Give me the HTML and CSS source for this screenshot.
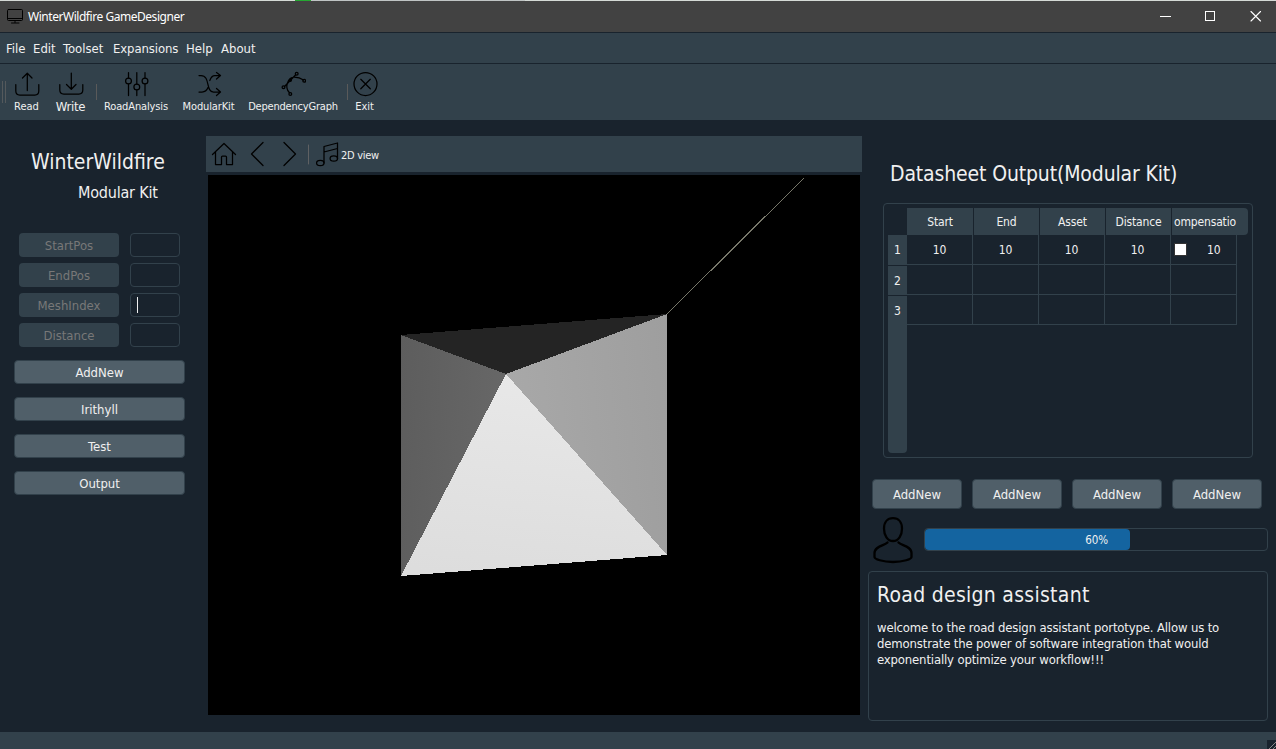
FILE: index.html
```
<!DOCTYPE html>
<html lang="en">
<head>
<meta charset="utf-8">
<title>WinterWildfire GameDesigner</title>
<link rel="stylesheet" href="styles.css">
</head>
<body>
<div class="window">
  <div class="backdrop"></div>
  <header class="titlebar">
    <svg class="app-icon" width="18" height="16" viewBox="0 0 18 16"><path d="M1.500.5h13q1 0 1 1v9q0 1-1 1h-13q-1 0-1-1v-9q0-1 1-1zM.5 9.500h15M8 11.500v2M4.500 14h7.500"/></svg>
    <span class="app-title">WinterWildfire GameDesigner</span>
    <svg class="win-controls" width="104" height="12" viewBox="0 0 104 12"><path shape-rendering="crispEdges" d="M0 5.500h10M45.500.5h9v9h-9z"/><path d="M91 .5l9.500 9.500M100.500 .5l-9.500 9.500"/></svg>
  </header>
  <nav class="menubar"><span class="m-file">File</span><span class="m-edit">Edit</span><span class="m-tools">Toolset</span><span class="m-exp">Expansions</span><span class="m-help">Help</span><span>About</span></nav>
  <div class="toolbar">
    <i class="grip"></i>
    <div class="tool"><svg width="26" height="26" viewBox="0 0 26 26"><path d="M1.800 13.500V20q0 4 4 4h15q4 0 4-4v-6.500M13.300 19.500V2.500M8.500 7l4.800-4.800L18 7"/></svg><span>Read</span></div>
    <div class="tool tool-large"><svg width="26" height="26" viewBox="0 0 26 26"><path d="M1.800 13.500V19q0 4 4 4h15q4 0 4-4v-5.500M13.300 2v16M8.500 13.500l4.800 4.800 4.700-4.800"/></svg><span>Write</span></div>
    <i class="sep"></i>
    <div class="tool tool-road"><svg width="26" height="26" viewBox="0 0 26 26"><path d="M5.500 1.500V7M5.500 13v11.500M13.800 1.500V13M13.800 19v5.500M22 1.500V7M22 13v11.500"/><circle cx="5.500" cy="10" r="2.900"/><circle cx="13.800" cy="16" r="2.900"/><circle cx="22" cy="10" r="2.900"/></svg><span>RoadAnalysis</span></div>
    <div class="tool tool-kit"><svg width="26" height="26" viewBox="0 0 26 26"><path d="M3 4.500h2c9.500 0 4.500 16.500 12.500 16.500h6.500M3 21h3c3.500 0 5-2 6-4.500M13.800 9.500c1-3 2.500-5 5-5H24M20.500 1.500l4 3-4 3.500M20.500 17.500l4 3.500-4 3.500"/></svg><span>ModularKit</span></div>
    <div class="tool tool-dep"><svg width="26" height="26" viewBox="0 0 26 26"><path d="M4.500 15.500L15.500 4M9.300 21.500c-5-5-1.500-15.500 5-15.500 4 0 6.500 1 9.200 3"/><circle cx="16.700" cy="2.800" r="1.400"/><circle cx="3.500" cy="16.300" r="1.400"/><circle cx="10.300" cy="23" r="1.400"/><circle cx="24.200" cy="9.800" r="1.400"/><circle cx="10.400" cy="9.300" r="1"/></svg><span>DependencyGraph</span></div>
    <i class="sep"></i>
    <div class="tool tool-exit"><svg width="26" height="26" viewBox="0 0 26 26"><circle cx="13.500" cy="13" r="11.500"/><path d="M8.800 8.300l9.500 9.500M18.300 8.300l-9.500 9.500"/></svg><span>Exit</span></div>
  </div>
  <main class="workspace">
    <aside class="side">
      <h1>WinterWildfire</h1>
      <h2>Modular Kit</h2>
      <div class="fields">
        <b class="field-name">StartPos</b><i class="field"></i>
        <b class="field-name">EndPos</b><i class="field"></i>
        <b class="field-name">MeshIndex</b><i class="field"><u class="caret"></u></i>
        <b class="field-name">Distance</b><i class="field"></i>
      </div>
      <div class="actions">
        <button>AddNew</button><button>Irithyll</button><button>Test</button><button>Output</button>
      </div>
    </aside>
    <section class="viewer">
      <div class="viewbar">
        <svg width="134" height="36" viewBox="0 0 134 36"><path d="M6.500 18.500L18 7.500l11.500 11M9.500 16v12.500h6V21q0-1 1-1h3q1 0 1 1v7.500h6V16M57 6.500L45.500 18 57 29.500M78 6.500L89.500 18 78 29.500M118 27V10.500l13.500-3.500v16M118 16l13.500-3.500"/><ellipse cx="114.300" cy="27" rx="3.700" ry="2.700"/><ellipse cx="127.800" cy="22.500" rx="3.700" ry="2.700"/><path class="divider" d="M102.500 9v19"/></svg>
        <span>2D view</span>
      </div>
      <svg class="canvas" width="652" height="540" viewBox="208 175 652 540" shape-rendering="crispEdges">
        <defs>
          <linearGradient id="gl" x1="0" x2="1" y1="0" y2=".15"><stop offset="0" stop-color="#5d5d5d"/><stop offset="1" stop-color="#676767"/></linearGradient>
          <linearGradient id="gr" x1="0" x2="1" y1=".15" y2="0"><stop offset="0" stop-color="#a8a8a8"/><stop offset="1" stop-color="#9e9e9e"/></linearGradient>
          <linearGradient id="gf" x1=".45" x2=".3" y1="0" y2="1"><stop offset="0" stop-color="#e8e8e8"/><stop offset="1" stop-color="#dddddd"/></linearGradient>
        </defs>
        <path fill="#242424" d="M401 335L667 314 506 374z"/>
        <path fill="url(#gl)" d="M401 335L506 374 401 576z"/>
        <path fill="url(#gr)" d="M667 314V555L506 374z"/>
        <path fill="url(#gf)" d="M506 374L667 555 401 576z"/>
        <path class="ray" d="M667 314L804 178"/>
      </svg>
    </section>
    <section class="output">
      <h1>Datasheet Output(Modular Kit)</h1>
      <div class="sheet">
        <div class="rows"><span>1</span><span>2</span><span>3</span></div>
        <div class="grid">
          <div class="head"><span>Start</span><span>End</span><span>Asset</span><span>Distance</span><span class="clip">ompensatio</span></div>
          <div class="cells">
            <span>10</span><span>10</span><span>10</span><span>10</span><span class="checked"><i></i>10</span>
            <span></span><span></span><span></span><span></span><span></span>
            <span></span><span></span><span></span><span></span><span></span>
          </div>
        </div>
      </div>
      <div class="buttons"><button>AddNew</button><button>AddNew</button><button>AddNew</button><button>AddNew</button></div>
      <div class="progress-row">
        <svg width="42" height="48" viewBox="0 0 42 48"><path d="M21 2.200c5.500 0 9 4 9 10.500S26.500 25 21 25s-9-5.800-9-12.300S15.500 2.200 21 2.200zM15.500 26.500c-2.500 3-13 3.500-13 10.500v4c0 2 8 5 18.500 5s18.500-3 18.500-5v-4c0-7-10.500-7.500-13-10.500"/></svg>
        <div class="progress"><div class="bar" style="width:60%">60%</div></div>
      </div>
      <article class="assistant">
        <h1>Road design assistant</h1>
        <p>welcome to the road design assistant portotype. Allow us to<br>demonstrate the power of software integration that would<br>exponentially optimize your workflow!!!</p>
      </article>
    </section>
  </main>
  <footer class="statusbar"><svg width="9" height="9" viewBox="0 0 9 9"><path d="M2 9l7-7M6 9l3-3"/></svg></footer>
</div>
</body>
</html>
```
FILE: styles.css
```
* { box-sizing: border-box; }
body { margin: 0; overflow: hidden; background: #19232d; color: #f0f0f0; font: 12px/16px "DejaVu Sans Condensed", "Noto Sans", sans-serif; }
h1, h2, p { margin: 0; font-weight: 400; white-space: nowrap; }
i, b, u { font-style: normal; font-weight: 400; text-decoration: none; }
svg { display: block; flex: none; fill: none; stroke: #000; stroke-width: 1.25; stroke-linecap: round; stroke-linejoin: round; }
span { white-space: nowrap; }
button { font: inherit; color: inherit; background: #505f69; border: 1px solid #32414b; border-radius: 4px; padding: 1px 0 0; }
.window { width: 1276px; height: 749px; display: flex; flex-direction: column; }
.backdrop { height: 1px; background: linear-gradient(90deg, #d5dad6 0 295px, #25a832 295px 311px, #bfc4c4 311px 525px, #d5dad6 525px); }
.titlebar { height: 31px; background: #424242; display: flex; align-items: center; padding: 0 12px 0 7px; color: #fff; }
.app-icon { stroke-width: 1; }
.app-title { margin-left: 3px; font-family: "Noto Sans", sans-serif; font-size: 12px; letter-spacing: -.46px; }
.win-controls { margin-left: auto; stroke: #fff; stroke-width: 1.1; }
.menubar { height: 31px; margin-top: 1px; background: #32414b; display: flex; align-items: center; padding-left: 6px; font-size: 13px; }
.menubar span { flex: none; }
.m-file { width: 27px; }
.m-edit { width: 30px; }
.m-tools { width: 50px; }
.m-exp { width: 73px; letter-spacing: -.1px; }
.m-help { width: 35px; }
.toolbar { height: 56px; background: #32414b; display: grid; grid-template-columns: 8px 37px 51px 1px 78px 67px 105px 1px 33px; box-shadow: 0 -1px #19232d; }
.grip { width: 4px; height: 22px; margin: 17px 0 0 2px; border: 1px solid #54595c; border-width: 0 1px; }
.sep { width: 1px; height: 16px; margin-top: 20px; background: #5a5a5a; }
.tool { display: flex; flex-direction: column; align-items: center; padding-top: 7px; font-size: 11px; line-height: 20px; }
.tool-large { font-size: 13px; letter-spacing: -.3px; }
.tool-road, .tool-kit { letter-spacing: -.13px; }
.tool-dep { padding-right: 3px; letter-spacing: -.2px; }
.workspace { flex: 1; min-height: 0; display: flex; }
.side { width: 206px; padding: 29px 21px 0 14px; display: flex; flex-direction: column; }
.side h1 { font-size: 21px; line-height: 26px; padding-left: 17px; }
.side h2 { font-size: 16px; line-height: 20px; padding: 8px 0 0 64px; letter-spacing: -.2px; }
.fields { display: grid; grid-template-columns: 100px 50px; gap: 6px 11px; margin: 30px 0 0 5px; font-size: 13px; }
.field-name { height: 24px; background: #32414b; border-radius: 4px; text-align: center; line-height: 25px; color: #787878; }
.field { height: 24px; border: 1px solid #32414b; border-radius: 4px; padding: 3px 6px; }
.caret { display: block; width: 1px; height: 16px; background: #f0f0f0; }
.actions { display: flex; flex-direction: column; gap: 13px; margin-top: 13px; font-size: 13px; letter-spacing: -.1px; }
.actions button { height: 24px; }
.viewer { width: 656px; padding-top: 16px; }
.viewbar { height: 36px; margin-bottom: 3px; background: #32414b; display: flex; align-items: center; font-size: 11px; letter-spacing: -.3px; }
.viewbar span { margin-left: 1px; padding-top: 3px; }
.divider { stroke: #5f6163; stroke-width: 1; }
.canvas { margin-left: 2px; background: #000; stroke: none; }
.ray { stroke: #77776a; stroke-width: 1; }
.output { width: 414px; padding: 40px 8px 0 6px; }
.output h1 { font-size: 21px; line-height: 28px; letter-spacing: -.14px; }
.output > h1 { padding-left: 22px; }
.sheet { width: 370px; height: 255px; margin: 15px 0 0 15px; border: 1px solid #32414b; border-radius: 4px; padding: 4px; display: flex; }
.rows { width: 19px; height: 218px; margin-top: 27px; background: #32414b; border-radius: 0 0 4px 4px; }
.rows span { display: block; height: 30px; border-bottom: 1px solid #19232d; text-align: center; line-height: 31px; }
.rows span:first-child { height: 31px; }
.rows span:last-child { border: 0; }
.head { width: 341px; height: 27px; background: #32414b; border-radius: 0 4px 4px 0; display: flex; line-height: 28px; text-align: center; letter-spacing: -.15px; }
.head span { width: 66px; border-right: 1px solid #19232d; }
.head span:first-child { width: 67px; }
.head .clip { border: 0; overflow: hidden; }
.cells { display: grid; grid-template-columns: repeat(5, 66px); grid-auto-rows: 30px; text-align: center; line-height: 30px; letter-spacing: -.2px; }
.cells span { border: 1px solid #32414b; border-width: 0 1px 1px 0; }
.cells .checked { display: flex; align-items: center; padding-left: 3px; }
.checked i { width: 13px; height: 13px; background: #fff; border: 1px solid #333; margin-right: 20px; }
.buttons { display: flex; gap: 10px; margin: 21px 0 0 4px; font-size: 13px; letter-spacing: -.1px; }
.buttons button { width: 90px; height: 30px; }
.progress-row { display: flex; align-items: center; padding: 7px 0 0 4px; gap: 10px; }
.progress-row svg { stroke-width: 2.300; }
.progress { width: 344px; height: 23px; margin-bottom: 2px; border: 1px solid #32414b; border-radius: 4px; }
.bar { height: 21px; background: #1464a0; border-radius: 4px; padding-right: 22px; text-align: right; font-size: 11.500px; line-height: 22px; }
.assistant { width: 400px; height: 150px; margin-top: 7px; border: 1px solid #32414b; border-radius: 4px; padding: 9px 8px; }
.assistant h1 { letter-spacing: .28px; }
.assistant p { margin-top: 11px; font-size: 13px; letter-spacing: -.16px; }
.statusbar { height: 17px; background: #32414b; display: flex; align-items: flex-end; justify-content: flex-end; }
.statusbar svg { background: #19232d; stroke: #888; stroke-width: 1; }
```
